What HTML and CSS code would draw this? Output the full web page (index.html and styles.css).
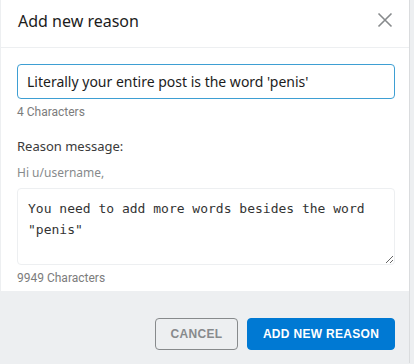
FILE: index.html
```html
<!DOCTYPE html>
<html lang="en">
<head>
    <meta charset="UTF-8">
    <meta name="viewport" content="width=device-width, initial-scale=1.0">
    <title>Add new reason</title>
    <link rel="stylesheet" href="styles.css">
</head>
<body>

<div class="modal">
    <div class="modal-header">
        <h2 class="modal-title">Add new reason</h2>
        <button class="close-btn" aria-label="Close">
            <svg width="16" height="16" viewBox="0 0 16 16"><path d="M1.5 1.5 L14.5 14.5 M14.5 1.5 L1.5 14.5" stroke="#878a8c" stroke-width="1.6" fill="none"/></svg>
        </button>
    </div>

    <div class="modal-body">
        <input class="title-input" type="text" value="Literally your entire post is the word 'penis'">
        <div class="counter">4 Characters</div>

        <div class="field-label">Reason message:</div>
        <div class="greeting">Hi u/username,</div>
        <textarea class="message-input">You need to add more words besides the word "penis"</textarea>
        <div class="counter">9949 Characters</div>
    </div>

    <div class="modal-footer">
        <button class="btn btn-outline">Cancel</button>
        <button class="btn btn-primary">Add new reason</button>
    </div>
</div>

</body>
</html>
```

FILE: styles.css
```css
body {
    margin: 0;
    padding: 0 4px 0 0;
    background-color: #edeff1;
    font-family: "Noto Sans", Arial, sans-serif;
    color: #1c1c1c;
    height: 364px;
    overflow: hidden;
}

.modal {
    background-color: #fff;
    border-left: 1px solid #edeff1;
    border-right: 1px solid #dadcde;
}

.modal-header {
    display: flex;
    align-items: center;
    justify-content: space-between;
    height: 47px;
    padding: 0 16px 0 17px;
    border-bottom: 1px solid #edeff1;
}

.modal-title {
    margin: 0 0 5px 0;
    font-size: 16px;
    font-weight: 400;
}

.close-btn {
    background: none;
    border: none;
    padding: 0;
    width: 16px;
    height: 16px;
    margin-top: -7px;
    cursor: pointer;
}

.modal-body {
    padding: 16px 14px 5px 16px;
}

.title-input {
    display: block;
    width: 100%;
    box-sizing: border-box;
    height: 35px;
    padding: 0 9px;
    border: 1px solid #3e9fd3;
    border-radius: 4px;
    font-family: "Noto Sans", Arial, sans-serif;
    font-size: 14px;
    color: #1c1c1c;
    outline: none;
}

.counter {
    font-family: Roboto, Arial, sans-serif;
    font-size: 12px;
    color: #7c7c7c;
    margin-top: 5px;
    line-height: 16px;
}

.field-label {
    font-size: 13px;
    margin-top: 17px;
    line-height: 18px;
    color: #3a3a3a;
}

.greeting {
    font-size: 12px;
    color: #878a8c;
    margin-top: 10px;
    line-height: 16px;
}

.message-input {
    display: block;
    width: 100%;
    box-sizing: border-box;
    height: 77px;
    margin-top: 7px;
    padding: 9px 10px;
    border: 1px solid #edeff1;
    border-radius: 4px;
    font-family: "DejaVu Sans Mono", monospace;
    font-size: 13px;
    line-height: 21px;
    color: #333;
    resize: vertical;
    outline: none;
}

.modal-footer {
    display: flex;
    justify-content: flex-end;
    gap: 9px;
    background-color: #edeff1;
    padding: 27px 14px 14px 0;
    height: 31px;
}

.btn {
    height: 32px;
    border-radius: 4px;
    font-family: Arial, "Liberation Sans", sans-serif;
    font-size: 12px;
    font-weight: 700;
    text-transform: uppercase;
    letter-spacing: 0.3px;
    cursor: pointer;
}

.btn-outline {
    width: 83px;
    background: transparent;
    border: 1px solid #878a8c;
    color: #878a8c;
}

.btn-primary {
    width: 148px;
    background-color: #0079d3;
    border: 1px solid #0079d3;
    color: #fff;
}
```
